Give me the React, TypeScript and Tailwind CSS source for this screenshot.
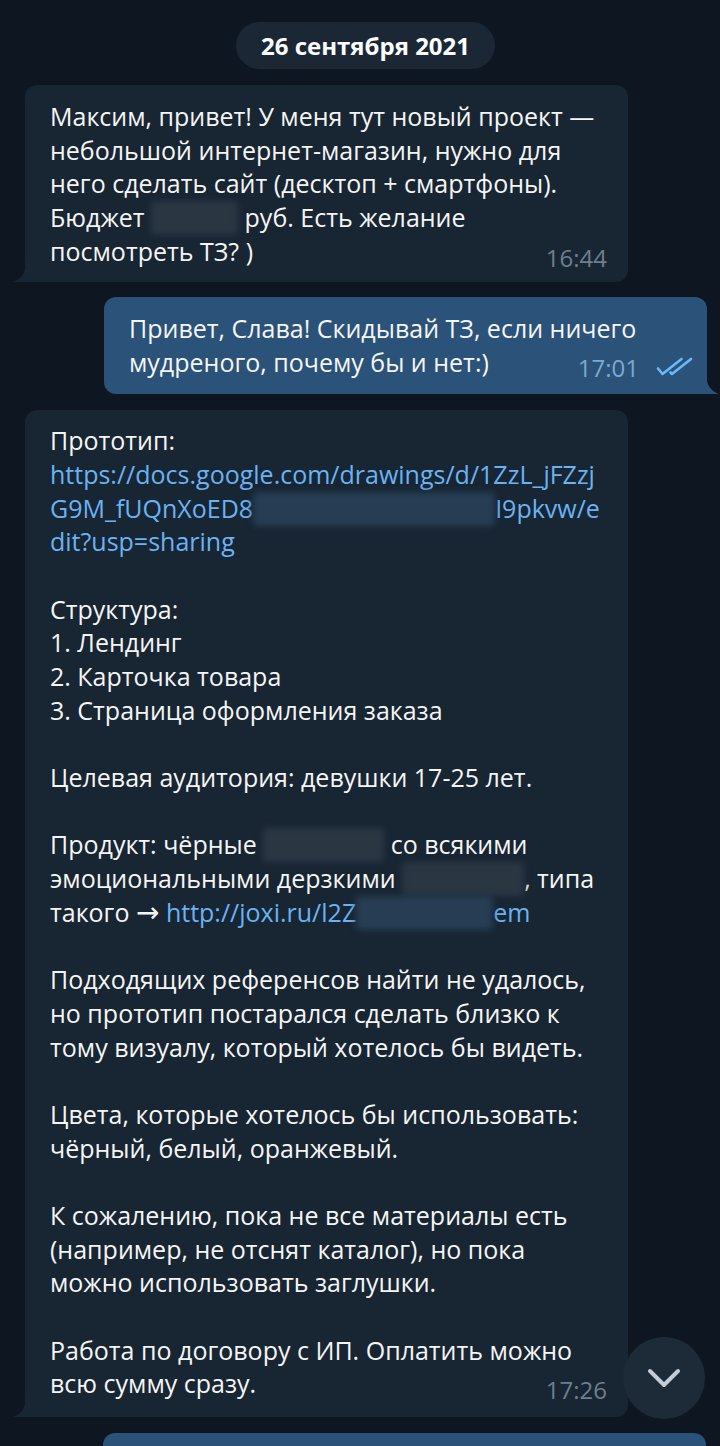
import React from "react";

const Blur = ({ w, link }: { w: number; link?: boolean }) => (
  <span
    className={`inline-block h-[34px] align-top rounded-[3px] blur-[3px] ${link ? "bg-[#263d53]" : "bg-[#2b3643]"}`}
    style={{ width: w }}
  />
);

const TailLeft = ({ color }: { color: string }) => (
  <svg className="absolute left-[-12px] bottom-0" width="13" height="20" viewBox="0 0 13 20">
    <path d="M13 0 C13 11 8 17 0 20 L13 20 Z" fill={color} />
  </svg>
);

const TailRight = ({ color }: { color: string }) => (
  <svg className="absolute right-[-12px] bottom-0" width="13" height="20" viewBox="0 0 13 20">
    <path d="M0 0 C0 11 5 17 13 20 L0 20 Z" fill={color} />
  </svg>
);

const Link = ({ children }: { children: React.ReactNode }) => (
  <span className="text-[#6ab3f3]">{children}</span>
);

export default function App() {
  const bubble3: React.ReactNode[] = [
    "Прототип:",
    <Link>https://docs.google.com/drawings/d/1ZzL_jFZzj</Link>,
    <>
      <Link>G9M_fUQnXoED8</Link>
      <Blur w={242} link />
      <Link>I9pkvw/e</Link>
    </>,
    <Link>dit?usp=sharing</Link>,
    "",
    "Структура:",
    "1. Лендинг",
    "2. Карточка товара",
    "3. Страница оформления заказа",
    "",
    "Целевая аудитория: девушки 17-25 лет.",
    "",
    <>
      Продукт: чёрные <Blur w={121} /> со всякими
    </>,
    <>
      эмоциональными дерзкими <Blur w={122} />, типа
    </>,
    <>
      такого{" "}
      <span style={{ fontFamily: '"DejaVu Sans", sans-serif' }} className="text-[28px] leading-[20px]">
        →
      </span>{" "}
      <Link>http://joxi.ru/l2Z</Link>
      <Blur w={137} link />
      <Link>em</Link>
    </>,
    "",
    "Подходящих референсов найти не удалось,",
    "но прототип постарался сделать близко к",
    "тому визуалу, который хотелось бы видеть.",
    "",
    "Цвета, которые хотелось бы использовать:",
    "чёрный, белый, оранжевый.",
    "",
    "К сожалению, пока не все материалы есть",
    "(например, не отснят каталог), но пока",
    "можно использовать заглушки.",
    "",
    "Работа по договору с ИП. Оплатить можно",
  ];

  return (
    <div
      className="relative w-[720px] h-[1446px] overflow-hidden bg-[#0e1621] text-[#f5f5f5]"
      style={{ fontFamily: '"Open Sans", "Noto Sans", sans-serif' }}
    >
      <div className="flex justify-center pt-[22px] pl-[11px]">
        <div className="h-[47px] px-[25px] rounded-full bg-[#1b2735] flex items-center text-[24px] font-bold text-white">
          26 сентября 2021
        </div>
      </div>

      {/* bubble 1 */}
      <div className="relative mt-[16px] ml-[25px] w-[603px] bg-[#182533] rounded-[12px] rounded-bl-none pl-[25px] pr-[21px] pt-[15px] pb-[13px] text-[25px] leading-[33.7px]">
        <div className="whitespace-nowrap">Максим, привет! У меня тут новый проект —</div>
        <div className="whitespace-nowrap">небольшой интернет-магазин, нужно для</div>
        <div className="whitespace-nowrap">него сделать сайт (десктоп + смартфоны).</div>
        <div className="whitespace-nowrap">
          Бюджет <Blur w={87} /> руб. Есть желание
        </div>
        <div className="flex justify-between items-end whitespace-nowrap">
          <span>посмотреть ТЗ? )</span>
          <span className="text-[24px] text-[#6d7f8f] translate-y-[6px]">16:44</span>
        </div>
        <TailLeft color="#182533" />
      </div>

      {/* bubble 2 */}
      <div className="relative mt-[15px] ml-auto mr-[13px] w-[603px] bg-[#2b5278] rounded-[12px] rounded-br-none pl-[25px] pr-[14px] pt-[15px] pb-[15px] text-[25px] leading-[33.7px]">
        <div className="whitespace-nowrap">Привет, Слава! Скидывай ТЗ, если ничего</div>
        <div className="flex justify-between items-end whitespace-nowrap">
          <span>мудреного, почему бы и нет:)</span>
          <span className="flex items-center gap-[16px] translate-y-[5px]">
            <span className="text-[24px] text-[#7da8d3]">17:01</span>
            <svg width="38" height="22" viewBox="0 0 38 22" fill="none" stroke="#6cb8f8" strokeWidth="2.6" strokeLinecap="round" strokeLinejoin="round">
              <path d="M3 12.5 L7.5 18 L26.5 3" />
              <path d="M15.5 16.5 L17 18 L36 3" />
            </svg>
          </span>
        </div>
        <TailRight color="#2b5278" />
      </div>

      {/* bubble 3 */}
      <div className="relative mt-[16px] ml-[25px] w-[603px] bg-[#182533] rounded-[12px] rounded-bl-none pl-[25px] pr-[21px] pt-[14px] pb-[16px] text-[25px] leading-[33.7px]">
        {bubble3.map((line, i) => (
          <div key={i} className="whitespace-nowrap h-[33.7px]">
            {line === "" ? "\u00a0" : line}
          </div>
        ))}
        <div className="flex justify-between items-end whitespace-nowrap">
          <span>всю сумму сразу.</span>
          <span className="text-[24px] text-[#6d7f8f] translate-y-[6px]">17:26</span>
        </div>
        <TailLeft color="#182533" />
      </div>

      {/* bottom bubble (partial) */}
      <div className="mt-[16px] ml-auto mr-[14px] w-[603px] h-[60px] bg-[#2b5278] rounded-t-[12px]" />

      {/* scroll down button */}
      <div className="absolute left-[623px] top-[1337px] w-[82px] h-[82px] rounded-full bg-[#1d2a38] flex items-center justify-center">
        <svg width="34" height="22" viewBox="0 0 34 22" fill="none" stroke="#c5ccd3" strokeWidth="4" strokeLinecap="round" strokeLinejoin="round">
          <path d="M3 4 L17 18 L31 4" />
        </svg>
      </div>
    </div>
  );
}
